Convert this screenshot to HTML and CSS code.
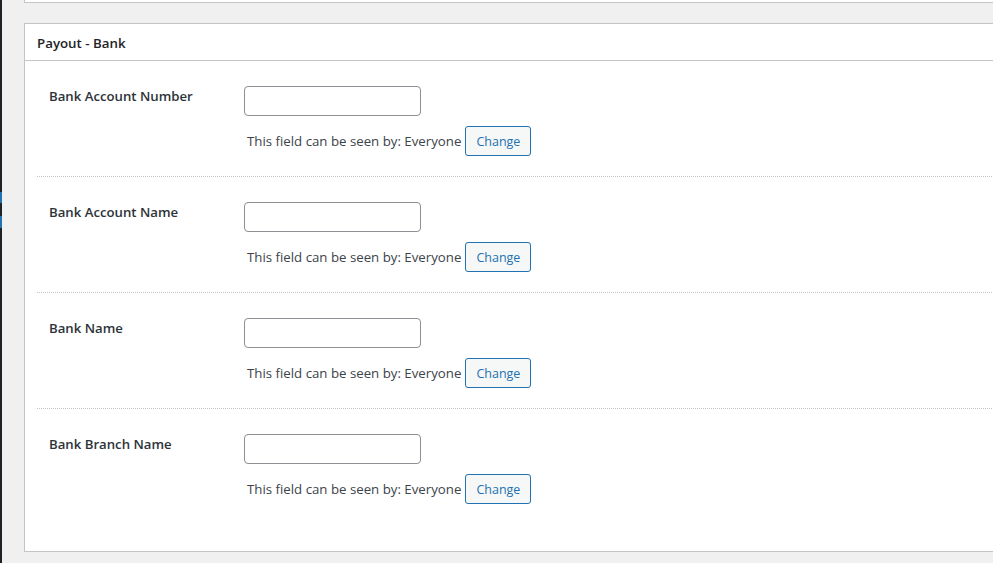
FILE: index.html
```html
<!DOCTYPE html>
<html>
<head>
<meta charset="utf-8">
<link rel="stylesheet" href="styles.css">
</head>
<body>
<div class="page">
  <div class="adminbar">
    <span class="mark mark1"></span>
    <span class="mark mark2"></span>
  </div>
  <div class="content">
    <div class="topbox"></div>
    <div class="postbox">
      <h2 class="box-title">Payout - Bank</h2>
      <div class="inside">
        <div class="row">
          <div class="label">Bank Account Number</div>
          <div class="field">
            <input class="text-input" type="text">
            <div class="visibility"><span class="vis-text">This field can be seen by: Everyone</span><button class="btn">Change</button></div>
          </div>
        </div>
        <div class="row">
          <div class="label">Bank Account Name</div>
          <div class="field">
            <input class="text-input" type="text">
            <div class="visibility"><span class="vis-text">This field can be seen by: Everyone</span><button class="btn">Change</button></div>
          </div>
        </div>
        <div class="row">
          <div class="label">Bank Name</div>
          <div class="field">
            <input class="text-input" type="text">
            <div class="visibility"><span class="vis-text">This field can be seen by: Everyone</span><button class="btn">Change</button></div>
          </div>
        </div>
        <div class="row last">
          <div class="label">Bank Branch Name</div>
          <div class="field">
            <input class="text-input" type="text">
            <div class="visibility"><span class="vis-text">This field can be seen by: Everyone</span><button class="btn">Change</button></div>
          </div>
        </div>
      </div>
    </div>
  </div>
</div>
</body>
</html>
```

FILE: styles.css
```css
* { box-sizing: border-box; }
html, body {
  margin: 0;
  padding: 0;
  height: 100%;
  overflow: hidden;
}
body {
  background: #f0f0f1;
  font-family: "Open Sans", "Noto Sans", sans-serif;
  color: #3c434a;
  font-size: 14px;
}
.page {
  display: flex;
  height: 563px;
}
.adminbar {
  width: 2px;
  flex: none;
  background: #1d2327;
  display: flex;
  flex-direction: column;
}
.mark {
  display: block;
  background: #2271b1;
  width: 2px;
}
.mark1 { margin-top: 192px; height: 11px; }
.mark2 { margin-top: 13px; height: 12px; }
.content {
  flex: 1;
  padding-left: 22px;
  margin-right: -20px;
}
.topbox {
  height: 3px;
  background: #fff;
  border: 1px solid #c3c4c7;
  border-top: none;
  margin-bottom: 20px;
}
.postbox {
  background: #fff;
  border: 1px solid #c3c4c7;
}
.box-title {
  margin: 0;
  height: 37px;
  padding: 1px 12px 0;
  border-bottom: 1px solid #c3c4c7;
  font-size: 13.3px;
  font-weight: 600;
  color: #1d2327;
  line-height: 36px;
}
.inside {
  padding: 0 0 27px 12px;
}
.row {
  display: flex;
  padding: 25px 0 20px;
  border-bottom: 1px dotted #c3c4c7;
}
.row.last { border-bottom: none; }
.label {
  width: 207px;
  flex: none;
  padding-left: 12px;
  font-weight: 600;
  color: #2c3338;
  font-size: 13.2px;
  line-height: 20px;
}
.field {
  display: flex;
  flex-direction: column;
  align-items: flex-start;
}
.text-input {
  width: 177px;
  height: 30px;
  border: 1px solid #8c8f94;
  border-radius: 4px;
  margin: 0;
  padding: 0 8px;
  background: #fff;
}
.visibility {
  margin-top: 10px;
  display: flex;
  align-items: center;
  padding-left: 3px;
}
.vis-text {
  font-size: 13.25px;
  color: #3c434a;
  margin-right: 4px;
}
.btn {
  height: 30px;
  width: 66px;
  border: 1px solid #2271b1;
  border-radius: 3px;
  background: #f6f7f7;
  color: #2271b1;
  font-family: "Open Sans", "Noto Sans", sans-serif;
  font-size: 12.5px;
  padding: 0;
  margin: 0;
}
```
